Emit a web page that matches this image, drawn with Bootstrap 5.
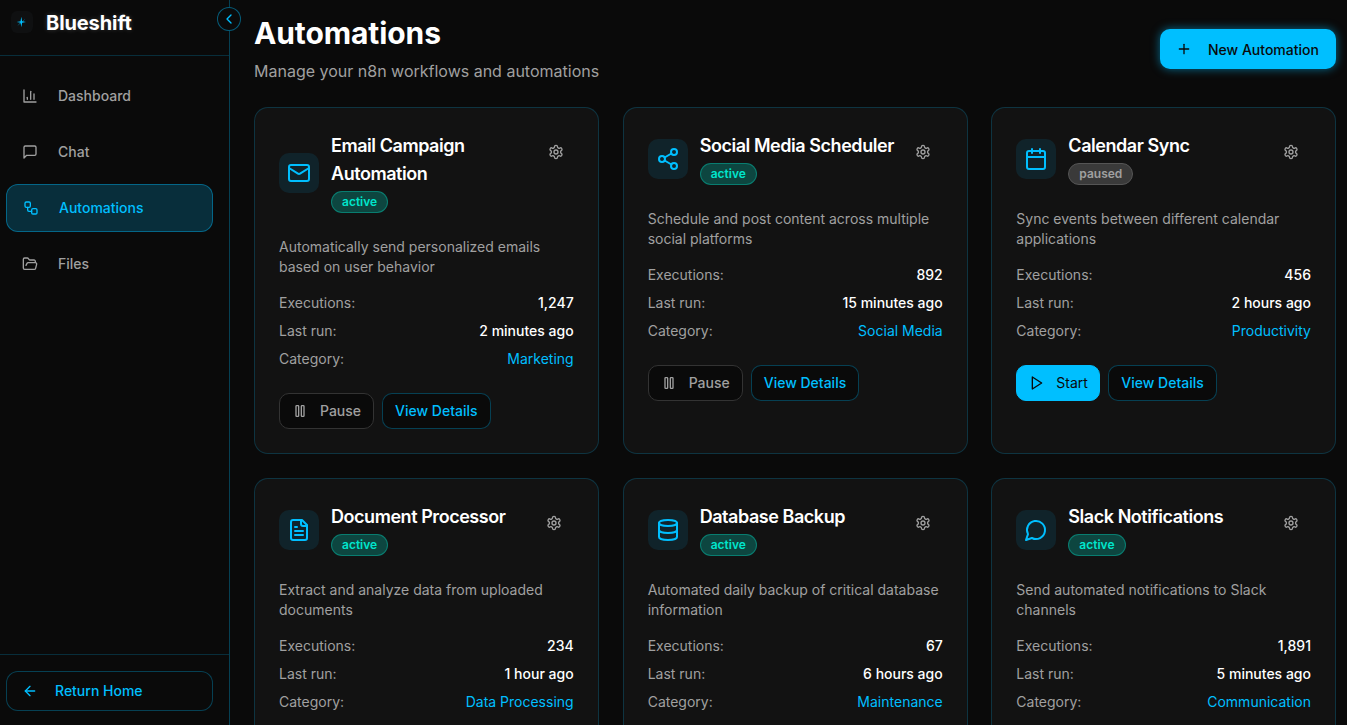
<!DOCTYPE html>
<html lang="en">
<head>
<meta charset="utf-8">
<title>Automations - Blueshift</title>
<link href="https://cdn.jsdelivr.net/npm/bootstrap@5.3.0/dist/css/bootstrap.min.css" rel="stylesheet">
<style>
html,body{height:100%;}
body{background:#0a0a0a;color:#fff;font-family:"Inter","Liberation Sans",sans-serif;font-size:14px;overflow:hidden;}
.ico{width:16px;height:16px;fill:none;stroke:currentColor;stroke-width:2;stroke-linecap:round;stroke-linejoin:round;flex:none;}
.ico-lg{width:24px;height:24px;}
.side{width:230px;flex:none;background:#0a0a0a;border-right:1px solid rgba(0,191,255,.3);}
.side-head{height:56px;padding:0 11px 11px;border-bottom:1px solid rgba(0,191,255,.2);gap:13px;}
.logo-box{width:22px;height:22px;border-radius:6px;background:#0f1011;}
.logo-star{width:16px;height:16px;fill:#00bfff;filter:blur(.5px);}
.brand{font-size:20px;font-weight:700;line-height:28px;margin-top:2px;letter-spacing:-.1px;text-shadow:0 0 5px rgba(255,255,255,.2);}
.collapse-btn{position:absolute;top:7px;left:217px;width:24px;height:24px;padding:0;border-radius:50%;border:1px solid rgba(0,191,255,.45);background:#0a0a0a;color:#00bfff;}
.collapse-btn .ico{width:16px;height:16px;}
.side-nav{padding:16px 16px 16px 6px;gap:8px;}
.nav-entry{height:48px;padding:0 16px;gap:20px;border-radius:12px;color:#a0a0a0;font-weight:500;text-decoration:none;line-height:20px;}
.nav-entry.current{color:#00bfff;background:rgba(0,191,255,.2);border:1px solid rgba(0,191,255,.4);}
.side-foot{padding:16px 16px 14px 6px;border-top:1px solid rgba(0,191,255,.2);}
.home-btn{height:40px;padding:0 15px 1px;gap:17px;border-radius:12px;border:1px solid rgba(0,191,255,.3);background:#0a0a0a;color:#00bfff;font-weight:500;font-size:14px;}
.home-btn .ico{margin-top:1px;}
.main-area{padding:15px 11px 0 24px;min-width:0;}
.page-title{font-size:30px;font-weight:700;line-height:36px;margin:0 0 8px;letter-spacing:-.1px;}
.page-sub{font-size:16px;line-height:24px;color:#a0a0a0;margin:0;}
.page-head{margin-bottom:24px;}
.new-btn{width:176px;height:40px;margin-top:14px;padding:0 16px;gap:16px;border-radius:10px;border:0;background:#00bfff;color:#0a0a0a;font-size:14px;font-weight:500;white-space:nowrap;box-shadow:0 0 10px rgba(0,191,255,.55);}
.auto-card{background:#121212;border:1px solid rgba(0,191,255,.2);border-radius:14px;padding:24px;color:#fff;}
.card-wide{width:calc(100% + .4px);}
.auto-top{margin-bottom:23px;}
.head-left{gap:12px;min-width:0;}
.icon-tile{width:40px;height:40px;border-radius:10px;background:rgba(0,191,255,.1);color:#00bfff;flex:none;}
.auto-name{font-size:18px;font-weight:600;line-height:28px;margin:0;letter-spacing:-.45px;}
.state{display:inline-block;margin-top:3px;height:22px;line-height:20px;padding:0 10px;border-radius:11px;font-size:12px;font-weight:600;vertical-align:top;}
.state-on{color:#00e5cc;background:rgba(0,229,204,.25);border:1px solid rgba(0,229,204,.35);}
.state-off{color:#a0a0a0;background:#3a3a3a;border:1px solid #555;}
.head-text{padding-bottom:1px;}
.gear-btn{width:40px;height:40px;padding:0;border:0;background:transparent;color:#a0a0a0;flex:none;}
.gear-tight{margin-right:-2px;margin-left:-2px;}
.auto-desc{color:#a0a0a0;font-size:14px;line-height:20px;margin:0 0 16px;}
.stat-list{gap:8px;margin-bottom:24px;line-height:20px;}
.stat-k{color:#a0a0a0;}
.stat-v{color:#fff;font-weight:500;}
.stat-c{color:#00bfff;}
.act-btn{height:36px;padding:0 12px 1px;gap:12px;border-radius:10px;font-size:14px;font-weight:500;}
.act-btn .ico{margin-top:1px;}
.act-pause{background:#0a0a0a;border:1px solid #333;color:#a0a0a0;}
.act-start{width:84px;gap:11px;background:#00bfff;border:1px solid #00bfff;color:#0a0a0a;font-weight:400;}
.act-view{background:#0a0a0a;border:1px solid rgba(0,191,255,.3);color:#00bfff;}
</style>
</head>
<body>
<svg width="0" height="0" class="position-absolute">
<symbol id="i-chart" viewBox="0 0 24 24"><path d="M3 3v18h18"/><path d="M18 17V9"/><path d="M13 17V5"/><path d="M8 17v-3"/></symbol>
<symbol id="i-chat" viewBox="0 0 24 24"><path d="M21 15a2 2 0 0 1-2 2H7l-4 4V5a2 2 0 0 1 2-2h14a2 2 0 0 1 2 2z"/></symbol>
<symbol id="i-flow" viewBox="0 0 24 24"><rect x="3" y="3" width="8" height="8" rx="2"/><path d="M7 11v4a2 2 0 0 0 2 2h4"/><rect x="13" y="13" width="8" height="8" rx="2"/></symbol>
<symbol id="i-folder" viewBox="0 0 24 24"><path d="m6 14 1.5-2.9A2 2 0 0 1 9.24 10H20a2 2 0 0 1 1.94 2.5l-1.54 6a2 2 0 0 1-1.95 1.5H4a2 2 0 0 1-2-2V5a2 2 0 0 1 2-2h3.9a2 2 0 0 1 1.69.9l.81 1.2a2 2 0 0 0 1.67.9H18a2 2 0 0 1 2 2v2"/></symbol>
<symbol id="i-mail" viewBox="0 0 24 24"><rect x="2" y="4" width="20" height="16" rx="2"/><path d="m22 7-8.97 5.7a1.94 1.94 0 0 1-2.06 0L2 7"/></symbol>
<symbol id="i-share" viewBox="0 0 24 24"><circle cx="18" cy="5" r="3"/><circle cx="6" cy="12" r="3"/><circle cx="18" cy="19" r="3"/><path d="m8.59 13.51 6.83 3.98"/><path d="m15.41 6.51-6.82 3.98"/></symbol>
<symbol id="i-cal" viewBox="0 0 24 24"><path d="M8 2v4"/><path d="M16 2v4"/><rect x="3" y="4" width="18" height="18" rx="2"/><path d="M3 10h18"/></symbol>
<symbol id="i-file" viewBox="0 0 24 24"><path d="M15 2H6a2 2 0 0 0-2 2v16a2 2 0 0 0 2 2h12a2 2 0 0 0 2-2V7Z"/><path d="M14 2v4a2 2 0 0 0 2 2h4"/><path d="M10 9H8"/><path d="M16 13H8"/><path d="M16 17H8"/></symbol>
<symbol id="i-db" viewBox="0 0 24 24"><ellipse cx="12" cy="5" rx="9" ry="3"/><path d="M3 5V19A9 3 0 0 0 21 19V5"/><path d="M3 12A9 3 0 0 0 21 12"/></symbol>
<symbol id="i-bubble" viewBox="0 0 24 24"><path d="M7.9 20A9 9 0 1 0 4 16.1L2 22Z"/></symbol>
<symbol id="i-gear" viewBox="0 0 24 24"><path d="M12.22 2h-.44a2 2 0 0 0-2 2v.18a2 2 0 0 1-1 1.73l-.43.25a2 2 0 0 1-2 0l-.15-.08a2 2 0 0 0-2.73.73l-.22.38a2 2 0 0 0 .73 2.73l.15.1a2 2 0 0 1 1 1.72v.51a2 2 0 0 1-1 1.74l-.15.09a2 2 0 0 0-.73 2.73l.22.38a2 2 0 0 0 2.73.73l.15-.08a2 2 0 0 1 2 0l.43.25a2 2 0 0 1 1 1.73V20a2 2 0 0 0 2 2h.44a2 2 0 0 0 2-2v-.18a2 2 0 0 1 1-1.73l.43-.25a2 2 0 0 1 2 0l.15.08a2 2 0 0 0 2.73-.73l.22-.39a2 2 0 0 0-.73-2.73l-.15-.08a2 2 0 0 1-1-1.74v-.5a2 2 0 0 1 1-1.74l.15-.09a2 2 0 0 0 .73-2.73l-.22-.38a2 2 0 0 0-2.73-.73l-.15.08a2 2 0 0 1-2 0l-.43-.25a2 2 0 0 1-1-1.73V4a2 2 0 0 0-2-2z"/><circle cx="12" cy="12" r="3"/></symbol>
<symbol id="i-pause" viewBox="0 0 24 24"><rect x="14" y="4" width="4" height="16" rx="1"/><rect x="6" y="4" width="4" height="16" rx="1"/></symbol>
<symbol id="i-play" viewBox="0 0 24 24"><polygon points="5 3 19 12 5 21 5 3"/></symbol>
<symbol id="i-plus" viewBox="0 0 24 24"><path d="M5 12h14"/><path d="M12 5v14"/></symbol>
<symbol id="i-back" viewBox="0 0 24 24"><path d="m12 19-7-7 7-7"/><path d="M19 12H5"/></symbol>
<symbol id="i-chev" viewBox="0 0 24 24"><path d="m15 18-6-6 6-6"/></symbol>
</svg>

<div class="d-flex vh-100 position-relative">
  <aside class="side d-flex flex-column">
    <div class="side-head d-flex align-items-center">
      <span class="logo-box d-flex align-items-center justify-content-center">
        <svg class="logo-star" viewBox="0 0 24 24"><path d="M11 4l1.200 6.800L18 12l-5.800 1.200L11 20l-1.200-6.800L4 12l5.800-1.200z"/><path d="M17 6.500l-3.500 6-1-1zM5 18l5-6 1 1z" opacity=".55"/></svg>
      </span>
      <span class="brand">Blueshift</span>
    </div>
    <button class="collapse-btn d-flex align-items-center justify-content-center" type="button" aria-label="Collapse sidebar"><svg class="ico"><use href="#i-chev"/></svg></button>
    <nav class="side-nav d-flex flex-column flex-grow-1">
      <a class="nav-entry d-flex align-items-center" href="#"><svg class="ico"><use href="#i-chart"/></svg>Dashboard</a>
      <a class="nav-entry d-flex align-items-center" href="#"><svg class="ico"><use href="#i-chat"/></svg>Chat</a>
      <a class="nav-entry current d-flex align-items-center" href="#"><svg class="ico"><use href="#i-flow"/></svg>Automations</a>
      <a class="nav-entry d-flex align-items-center" href="#"><svg class="ico"><use href="#i-folder"/></svg>Files</a>
    </nav>
    <div class="side-foot">
      <button class="home-btn btn d-flex align-items-center w-100" type="button"><svg class="ico"><use href="#i-back"/></svg>Return Home</button>
    </div>
  </aside>

  <main class="main-area flex-grow-1 overflow-hidden">
    <div class="page-head d-flex justify-content-between align-items-start">
      <div>
        <h1 class="page-title">Automations</h1>
        <p class="page-sub">Manage your n8n workflows and automations</p>
      </div>
      <button class="new-btn btn d-flex align-items-center" type="button"><svg class="ico"><use href="#i-plus"/></svg>New Automation</button>
    </div>

    <div class="row row-cols-3 g-4">
      <div class="col">
        <div class="auto-card h-100">
          <div class="auto-top d-flex justify-content-between">
            <div class="head-left d-flex align-items-center">
              <span class="icon-tile d-flex align-items-center justify-content-center"><svg class="ico ico-lg"><use href="#i-mail"/></svg></span>
              <div class="head-text"><h2 class="auto-name">Email Campaign Automation</h2><span class="state state-on">active</span></div>
            </div>
            <button class="gear-btn gear-tight d-flex align-items-center justify-content-center" type="button" aria-label="Settings"><svg class="ico"><use href="#i-gear"/></svg></button>
          </div>
          <p class="auto-desc">Automatically send personalized emails based on user behavior</p>
          <div class="stat-list d-flex flex-column">
            <div class="d-flex justify-content-between"><span class="stat-k">Executions:</span><span class="stat-v">1,247</span></div>
            <div class="d-flex justify-content-between"><span class="stat-k">Last run:</span><span class="stat-v">2 minutes ago</span></div>
            <div class="d-flex justify-content-between"><span class="stat-k">Category:</span><span class="stat-c">Marketing</span></div>
          </div>
          <div class="d-flex gap-2">
            <button class="act-btn act-pause btn d-flex align-items-center" type="button"><svg class="ico"><use href="#i-pause"/></svg>Pause</button>
            <button class="act-btn act-view btn" type="button">View Details</button>
          </div>
        </div>
      </div>
      <div class="col">
        <div class="auto-card card-wide h-100">
          <div class="auto-top d-flex justify-content-between">
            <div class="head-left d-flex align-items-center">
              <span class="icon-tile d-flex align-items-center justify-content-center"><svg class="ico ico-lg"><use href="#i-share"/></svg></span>
              <div class="head-text"><h2 class="auto-name">Social Media Scheduler</h2><span class="state state-on">active</span></div>
            </div>
            <button class="gear-btn d-flex align-items-center justify-content-center" type="button" aria-label="Settings"><svg class="ico"><use href="#i-gear"/></svg></button>
          </div>
          <p class="auto-desc">Schedule and post content across multiple social platforms</p>
          <div class="stat-list d-flex flex-column">
            <div class="d-flex justify-content-between"><span class="stat-k">Executions:</span><span class="stat-v">892</span></div>
            <div class="d-flex justify-content-between"><span class="stat-k">Last run:</span><span class="stat-v">15 minutes ago</span></div>
            <div class="d-flex justify-content-between"><span class="stat-k">Category:</span><span class="stat-c">Social Media</span></div>
          </div>
          <div class="d-flex gap-2">
            <button class="act-btn act-pause btn d-flex align-items-center" type="button"><svg class="ico"><use href="#i-pause"/></svg>Pause</button>
            <button class="act-btn act-view btn" type="button">View Details</button>
          </div>
        </div>
      </div>
      <div class="col">
        <div class="auto-card h-100">
          <div class="auto-top d-flex justify-content-between">
            <div class="head-left d-flex align-items-center">
              <span class="icon-tile d-flex align-items-center justify-content-center"><svg class="ico ico-lg"><use href="#i-cal"/></svg></span>
              <div class="head-text"><h2 class="auto-name">Calendar Sync</h2><span class="state state-off">paused</span></div>
            </div>
            <button class="gear-btn d-flex align-items-center justify-content-center" type="button" aria-label="Settings"><svg class="ico"><use href="#i-gear"/></svg></button>
          </div>
          <p class="auto-desc">Sync events between different calendar applications</p>
          <div class="stat-list d-flex flex-column">
            <div class="d-flex justify-content-between"><span class="stat-k">Executions:</span><span class="stat-v">456</span></div>
            <div class="d-flex justify-content-between"><span class="stat-k">Last run:</span><span class="stat-v">2 hours ago</span></div>
            <div class="d-flex justify-content-between"><span class="stat-k">Category:</span><span class="stat-c">Productivity</span></div>
          </div>
          <div class="d-flex gap-2">
            <button class="act-btn act-start btn d-flex align-items-center" type="button"><svg class="ico"><use href="#i-play"/></svg>Start</button>
            <button class="act-btn act-view btn" type="button">View Details</button>
          </div>
        </div>
      </div>
      <div class="col">
        <div class="auto-card h-100">
          <div class="auto-top d-flex justify-content-between">
            <div class="head-left d-flex align-items-center">
              <span class="icon-tile d-flex align-items-center justify-content-center"><svg class="ico ico-lg"><use href="#i-file"/></svg></span>
              <div class="head-text"><h2 class="auto-name">Document Processor</h2><span class="state state-on">active</span></div>
            </div>
            <button class="gear-btn d-flex align-items-center justify-content-center" type="button" aria-label="Settings"><svg class="ico"><use href="#i-gear"/></svg></button>
          </div>
          <p class="auto-desc">Extract and analyze data from uploaded documents</p>
          <div class="stat-list d-flex flex-column">
            <div class="d-flex justify-content-between"><span class="stat-k">Executions:</span><span class="stat-v">234</span></div>
            <div class="d-flex justify-content-between"><span class="stat-k">Last run:</span><span class="stat-v">1 hour ago</span></div>
            <div class="d-flex justify-content-between"><span class="stat-k">Category:</span><span class="stat-c">Data Processing</span></div>
          </div>
          <div class="d-flex gap-2">
            <button class="act-btn act-pause btn d-flex align-items-center" type="button"><svg class="ico"><use href="#i-pause"/></svg>Pause</button>
            <button class="act-btn act-view btn" type="button">View Details</button>
          </div>
        </div>
      </div>
      <div class="col">
        <div class="auto-card card-wide h-100">
          <div class="auto-top d-flex justify-content-between">
            <div class="head-left d-flex align-items-center">
              <span class="icon-tile d-flex align-items-center justify-content-center"><svg class="ico ico-lg"><use href="#i-db"/></svg></span>
              <div class="head-text"><h2 class="auto-name">Database Backup</h2><span class="state state-on">active</span></div>
            </div>
            <button class="gear-btn d-flex align-items-center justify-content-center" type="button" aria-label="Settings"><svg class="ico"><use href="#i-gear"/></svg></button>
          </div>
          <p class="auto-desc">Automated daily backup of critical database information</p>
          <div class="stat-list d-flex flex-column">
            <div class="d-flex justify-content-between"><span class="stat-k">Executions:</span><span class="stat-v">67</span></div>
            <div class="d-flex justify-content-between"><span class="stat-k">Last run:</span><span class="stat-v">6 hours ago</span></div>
            <div class="d-flex justify-content-between"><span class="stat-k">Category:</span><span class="stat-c">Maintenance</span></div>
          </div>
          <div class="d-flex gap-2">
            <button class="act-btn act-pause btn d-flex align-items-center" type="button"><svg class="ico"><use href="#i-pause"/></svg>Pause</button>
            <button class="act-btn act-view btn" type="button">View Details</button>
          </div>
        </div>
      </div>
      <div class="col">
        <div class="auto-card h-100">
          <div class="auto-top d-flex justify-content-between">
            <div class="head-left d-flex align-items-center">
              <span class="icon-tile d-flex align-items-center justify-content-center"><svg class="ico ico-lg"><use href="#i-bubble"/></svg></span>
              <div class="head-text"><h2 class="auto-name">Slack Notifications</h2><span class="state state-on">active</span></div>
            </div>
            <button class="gear-btn d-flex align-items-center justify-content-center" type="button" aria-label="Settings"><svg class="ico"><use href="#i-gear"/></svg></button>
          </div>
          <p class="auto-desc">Send automated notifications to Slack channels</p>
          <div class="stat-list d-flex flex-column">
            <div class="d-flex justify-content-between"><span class="stat-k">Executions:</span><span class="stat-v">1,891</span></div>
            <div class="d-flex justify-content-between"><span class="stat-k">Last run:</span><span class="stat-v">5 minutes ago</span></div>
            <div class="d-flex justify-content-between"><span class="stat-k">Category:</span><span class="stat-c">Communication</span></div>
          </div>
          <div class="d-flex gap-2">
            <button class="act-btn act-pause btn d-flex align-items-center" type="button"><svg class="ico"><use href="#i-pause"/></svg>Pause</button>
            <button class="act-btn act-view btn" type="button">View Details</button>
          </div>
        </div>
      </div>
    </div>
  </main>
</div>
<script src="https://cdn.jsdelivr.net/npm/bootstrap@5.3.0/dist/js/bootstrap.bundle.min.js"></script>
</body>
</html>
